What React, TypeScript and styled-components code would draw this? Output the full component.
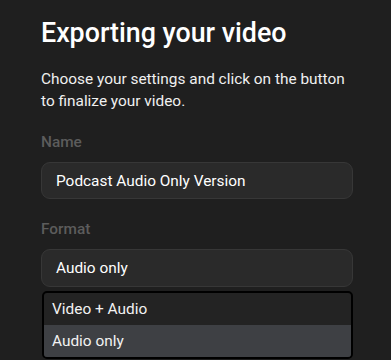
import styled, { createGlobalStyle } from "styled-components";

const GlobalStyle = createGlobalStyle`
  html, body {
    margin: 0;
    padding: 0;
    background: #1f1f1f;
    font-family: Roboto, "Liberation Sans", sans-serif;
    -webkit-font-smoothing: antialiased;
  }
`;

const formats = ["Video + Audio", "Audio only"];

export default function App() {
  const selected = "Audio only";

  return (
    <Page>
      <GlobalStyle />
      <Panel>
        <Title>Exporting your video</Title>
        <Intro>
          Choose your settings and click on the button to finalize your video.
        </Intro>
        <Field>
          <Label>Name</Label>
          <Input readOnly value="Podcast Audio Only Version" />
        </Field>
        <Field>
          <Label>Format</Label>
          <SelectWrap>
            <SelectBox>{selected}</SelectBox>
            <Menu>
              {formats.map((f) => (
                <Option key={f} $active={f === selected}>
                  {f}
                </Option>
              ))}
            </Menu>
          </SelectWrap>
        </Field>
      </Panel>
    </Page>
  );
}

const Page = styled.main`
  width: 391px;
  height: 360px;
  overflow: hidden;
  background: #1f1f1f;
  color: #f2f2f2;
`;

const Panel = styled.div`
  width: 312px;
  padding: 15px 0 0 41px;
  display: flex;
  flex-direction: column;
`;

const Title = styled.h1`
  margin: 0;
  font-size: 26.8px;
  font-weight: 500;
  line-height: 36px;
  color: #ffffff;
`;

const Intro = styled.p`
  margin: 17px 0 0;
  font-size: 15.4px;
  line-height: 22px;
  color: #f0f0f0;
`;

const Field = styled.div`
  display: flex;
  flex-direction: column;
  gap: 10px;
  margin-top: 20px;
`;

const Label = styled.label`
  font-size: 15.4px;
  font-weight: 500;
  line-height: 20px;
  color: #5c5c5c;
`;

const Input = styled.input`
  box-sizing: border-box;
  width: 312px;
  height: 37px;
  padding: 0 14px;
  border: 1px solid #373737;
  border-radius: 9px;
  background: #2a2a2a;
  color: #ffffff;
  font-family: inherit;
  font-size: 15.4px;
  outline: none;
`;

const SelectWrap = styled.div`
  position: relative;
`;

const SelectBox = styled.div`
  box-sizing: border-box;
  width: 312px;
  height: 38px;
  padding: 0 14px;
  display: flex;
  align-items: center;
  border: 1px solid #373737;
  border-radius: 9px;
  background: #2a2a2a;
  color: #ffffff;
  font-size: 15.4px;
`;

const Menu = styled.ul`
  position: absolute;
  top: 42px;
  left: 1px;
  box-sizing: border-box;
  width: 311px;
  margin: 0;
  padding: 0;
  list-style: none;
  border: 2px solid #000000;
  border-radius: 5px;
  background: #232323;
  overflow: hidden;
`;

const Option = styled.li<{ $active?: boolean }>`
  height: 32px;
  padding: 0 8px;
  display: flex;
  align-items: center;
  font-size: 15.4px;
  color: #f2f2f2;
  background: ${(p) => (p.$active ? "#3e4044" : "transparent")};
`;
